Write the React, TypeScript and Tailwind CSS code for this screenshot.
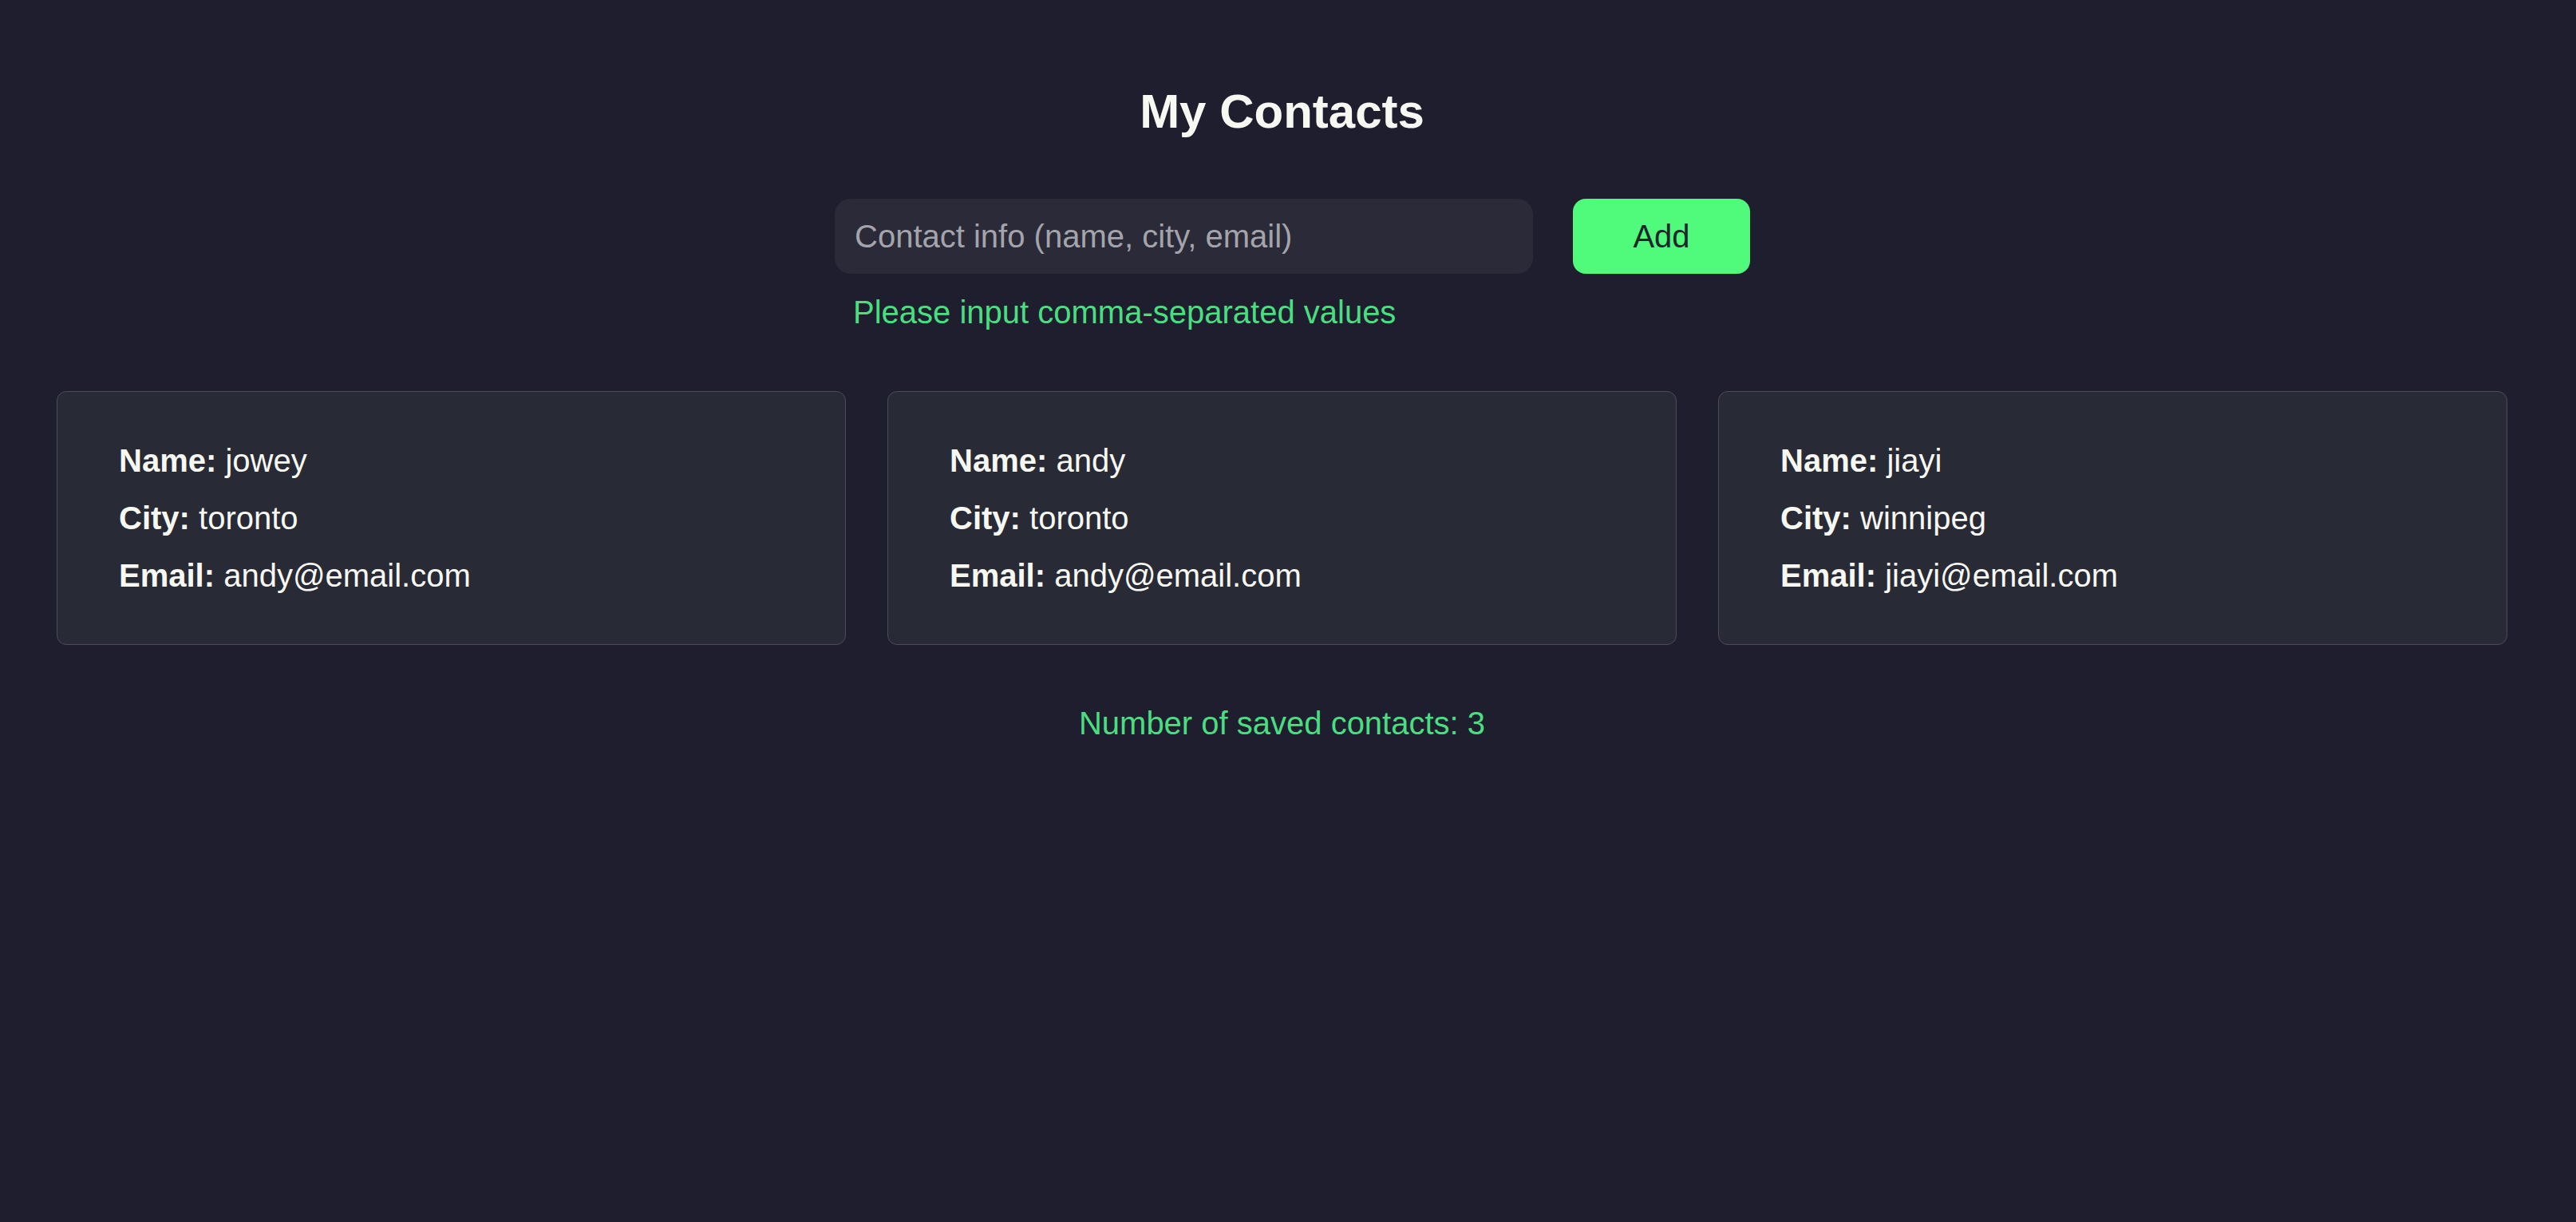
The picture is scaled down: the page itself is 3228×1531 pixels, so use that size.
import { useState } from "react";

type Contact = { name: string; city: string; email: string };

const initial: Contact[] = [
  { name: "jowey", city: "toronto", email: "andy@email.com" },
  { name: "andy", city: "toronto", email: "andy@email.com" },
  { name: "jiayi", city: "winnipeg", email: "jiayi@email.com" },
];

function ContactCard({ contact }: { contact: Contact }) {
  return (
    <div className="rounded-[12px] border border-[#4a4b5e] bg-[#282a36] px-[77px] py-[50px] text-[40px] leading-[72px] text-[#f8f8f2]">
      <p>
        <span className="font-bold">Name:</span> {contact.name}
      </p>
      <p>
        <span className="font-bold">City:</span> {contact.city}
      </p>
      <p>
        <span className="font-bold">Email:</span> {contact.email}
      </p>
    </div>
  );
}

export default function App() {
  const [contacts, setContacts] = useState<Contact[]>(initial);
  const [info, setInfo] = useState("");

  const handler = function () {
    const parts = info.split(",").map((p) => p.trim());
    if (parts.length !== 3 || parts.some((p) => !p)) return;
    setContacts([...contacts, { name: parts[0], city: parts[1], email: parts[2] }]);
    setInfo("");
  };

  return (
    <div
      className="min-h-screen w-full bg-[#1e1e2e] pt-[105px] pb-[100px]"
      style={{ fontFamily: '"Liberation Sans", Arial, sans-serif' }}
    >
      <div className="w-[3213px]">
        <h1 className="text-center text-[60px] font-bold leading-[69px] text-[#f8f8f2]">My Contacts</h1>

        <div className="mt-[75px] flex justify-center">
          <div className="ml-[26px] flex items-start gap-[50px]">
            <div className="flex flex-col">
              <input
                type="text"
                value={info}
                placeholder="Contact info (name, city, email)"
                onChange={(e) => setInfo(e.target.value)}
                className="h-[94px] w-[875px] rounded-[20px] bg-[#2a2a38] px-[25px] text-[40px] text-[#f8f8f2] outline-none placeholder:text-[#a4a4ab]"
              />
              <p className="mt-[25px] pl-[23px] text-[40px] leading-[46px] text-[#4ade80]">
                Please input comma-separated values
              </p>
            </div>
            <button
              onClick={handler}
              className="h-[94px] w-[222px] rounded-[16px] bg-[#50fa7b] text-[40px] text-[#22242e]"
            >
              Add
            </button>
          </div>
        </div>

        <div className="mt-[76px] grid grid-cols-3 gap-[52px] pl-[71px] pr-[71px]">
          {contacts.map((c, i) => (
            <ContactCard key={i} contact={c} />
          ))}
        </div>

        <p className="mt-[75px] text-center text-[40px] leading-[46px] text-[#4ade80]">
          Number of saved contacts: {contacts.length}
        </p>
      </div>
    </div>
  );
}
